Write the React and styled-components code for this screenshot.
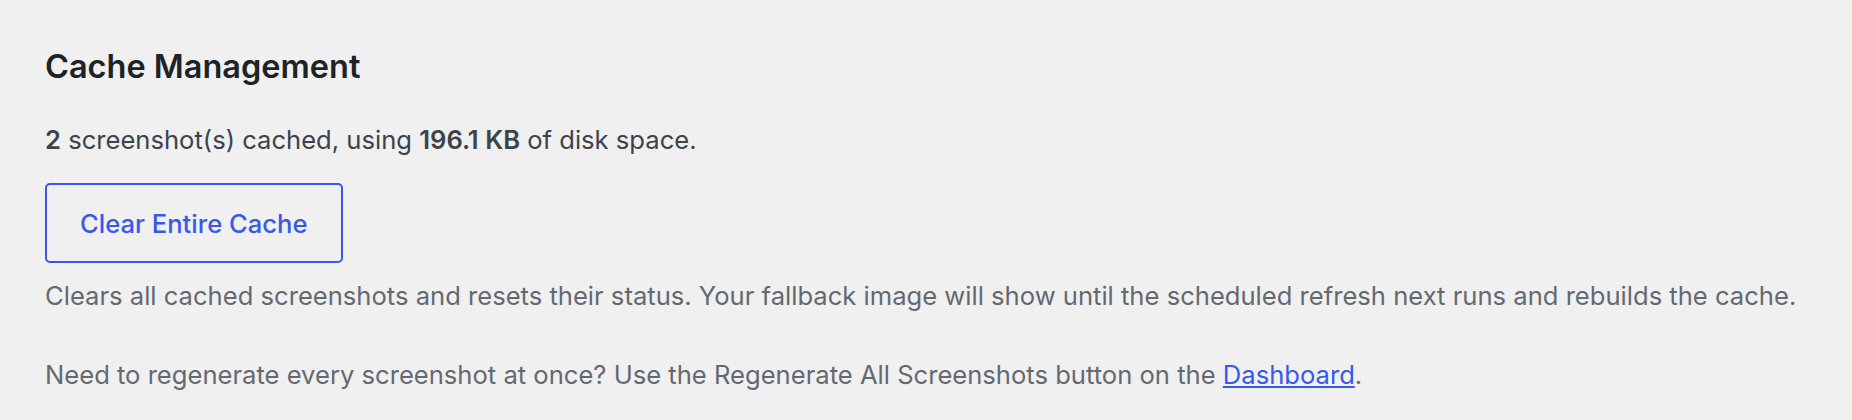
import React from 'react'
import styled, { createGlobalStyle } from 'styled-components';

const GlobalStyle = createGlobalStyle`
  html, body {
    margin: 0;
    padding: 0;
    background: #f0f0f1;
  }
  body {
    font-family: Inter, "Liberation Sans", sans-serif;
    -webkit-font-smoothing: antialiased;
  }
`;

const Section = styled.section`
  padding: 46px 45px 0 45px;
`;
const Title = styled.h2`
  margin: 0 0 36px;
  font-size: 32.5px;
  line-height: 41px;
  font-weight: 600;
  color: #1d2327;
`;
const Summary = styled.p`
  margin: 0 0 26px;
  font-size: 25.6px;
  line-height: 34px;
  color: #3c434a;

  strong {
    font-weight: 600;
  }
`;
const ClearButton = styled.button`
  display: block;
  box-sizing: border-box;
  height: 80px;
  padding: 0 33px;
  border: 2px solid #3858e9;
  border-radius: 5px;
  background: transparent;
  color: #3858e9;
  font-family: inherit;
  font-size: 25.6px;
  font-weight: 500;
  cursor: pointer;
`;
const Description = styled.p`
  margin: ${p => p.$gap}px 0 0;
  font-size: 25.6px;
  line-height: 34px;
  color: #646970;
`;
const Link = styled.a`
  color: #3858e9;
  text-decoration: underline;
`;

function App() {
    return (
        <>
            <GlobalStyle />
            <Section>
                <Title>Cache Management</Title>
                <Summary><strong>2</strong> screenshot(s) cached, using <strong>196.1 KB</strong> of disk space.</Summary>
                <ClearButton>Clear Entire Cache</ClearButton>
                <Description $gap={16}>Clears all cached screenshots and resets their status. Your fallback image will show until the scheduled refresh next runs and rebuilds the cache.</Description>
                <Description $gap={45}>Need to regenerate every screenshot at once? Use the Regenerate All Screenshots button on the <Link href="#">Dashboard</Link>.</Description>
            </Section>
        </>
    );
}
export default App
